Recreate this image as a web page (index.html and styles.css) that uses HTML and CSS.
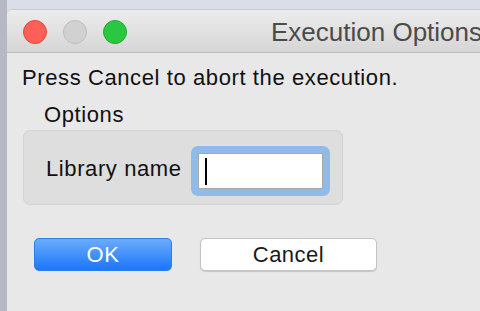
FILE: index.html
```html
<!DOCTYPE html>
<html lang="en">
<head>
  <meta charset="UTF-8">
  <title>Execution Options</title>
  <link rel="stylesheet" href="styles.css">
</head>
<body>

  <div class="window">
    <!-- Title bar -->
    <div class="titlebar">
      <div class="lights">
        <span class="light close"></span>
        <span class="light min"></span>
        <span class="light zoom"></span>
      </div>
      <div class="title">Execution Options</div>
    </div>

    <!-- Content -->
    <div class="content">
      <p class="message">Press Cancel to abort the execution.</p>
      <div class="group-label">Options</div>
      <div class="group">
        <label for="libName">Library name</label>
        <div class="focus-ring">
          <input type="text" id="libName">
          <span class="caret"></span>
        </div>
      </div>
      <div class="buttons">
        <button class="btn ok">OK</button>
        <button class="btn cancel">Cancel</button>
      </div>
    </div>
  </div>

</body>
</html>
```

FILE: styles.css
```css
/* General Styles */
html, body {
  margin: 0;
  padding: 0;
  height: 100%;
  overflow: hidden;
}

body {
  background: linear-gradient(to right, #b6b9c4 0, #b6b9c4 7px, #d9dee8 7px);
  font-family: "Liberation Sans", Arial, sans-serif;
  color: #111;
}

.window {
  margin: 9px 0 0 7px;
  height: 302px;
  background-color: #e8e8e8;
  border-top-left-radius: 6px;
  overflow: hidden;
  border-top: 1px solid #cacaca;
  box-sizing: border-box;
}

/* Title bar */
.titlebar {
  height: 43px;
  box-sizing: border-box;
  background: linear-gradient(#ececec, #d6d6d6);
  border-bottom: 1px solid #bdbdbd;
  display: flex;
  align-items: center;
  white-space: nowrap;
}

.lights {
  display: flex;
  gap: 16px;
  padding-left: 16px;
  padding-top: 2px;
}

.light {
  width: 24px;
  height: 24px;
  border-radius: 50%;
  box-sizing: border-box;
}

.light.close {
  background-color: #fe5f57;
  border: 1px solid #e2463f;
}

.light.min {
  background-color: #d1d1d1;
  border: 1px solid #bdbdbd;
}

.light.zoom {
  background-color: #2ac840;
  border: 1px solid #1eaa30;
}

.title {
  margin-left: 144px;
  font-size: 26px;
  line-height: 30px;
  color: #4b4b4b;
  padding-top: 2px;
}

/* Content */
.content {
  padding: 0 0 0 15px;
}

.message {
  margin: 12px 0 0 0;
  font-size: 22px;
  line-height: 26px;
  letter-spacing: 0.6px;
}

.group-label {
  margin: 11px 0 0 22px;
  font-size: 22px;
  line-height: 26px;
  letter-spacing: 0.6px;
}

.group {
  margin-top: 2px;
  margin-left: 1px;
  width: 320px;
  height: 75px;
  box-sizing: border-box;
  background-color: #dedede;
  border: 1px solid #d3d3d3;
  border-radius: 7px;
  display: flex;
  align-items: flex-start;
  padding: 15px 0 0 22px;
}

.group label {
  font-size: 22px;
  line-height: 26px;
  letter-spacing: 0.6px;
  margin: 10px 9px 0 0;
}

.focus-ring {
  position: relative;
  background-color: #8fbbea;
  border-radius: 7px;
  padding: 7px;
}

.focus-ring input {
  display: block;
  width: 125px;
  height: 36px;
  box-sizing: border-box;
  border: 1px solid #a9a9a9;
  background-color: #fff;
  outline: none;
  margin: 0;
  padding: 0;
}

.caret {
  position: absolute;
  left: 14px;
  top: 12px;
  width: 2px;
  height: 27px;
  background-color: #000;
}

/* Buttons */
.buttons {
  display: flex;
  gap: 28px;
  margin-top: 33px;
  margin-left: 12px;
}

.btn {
  height: 33px;
  font-family: "Liberation Sans", Arial, sans-serif;
  font-size: 22px;
  letter-spacing: 0.5px;
  border-radius: 5px;
  padding: 0;
  cursor: pointer;
}

.btn.ok {
  width: 138px;
  color: #fff;
  background: linear-gradient(#6cacfb, #1a76fb);
  border: 1px solid #2a7ef0;
}

.btn.cancel {
  width: 177px;
  color: #1a1a1a;
  background-color: #fff;
  border: 1px solid #c3c3c3;
  box-shadow: 0 1px 1px rgba(0, 0, 0, 0.15);
}
```
